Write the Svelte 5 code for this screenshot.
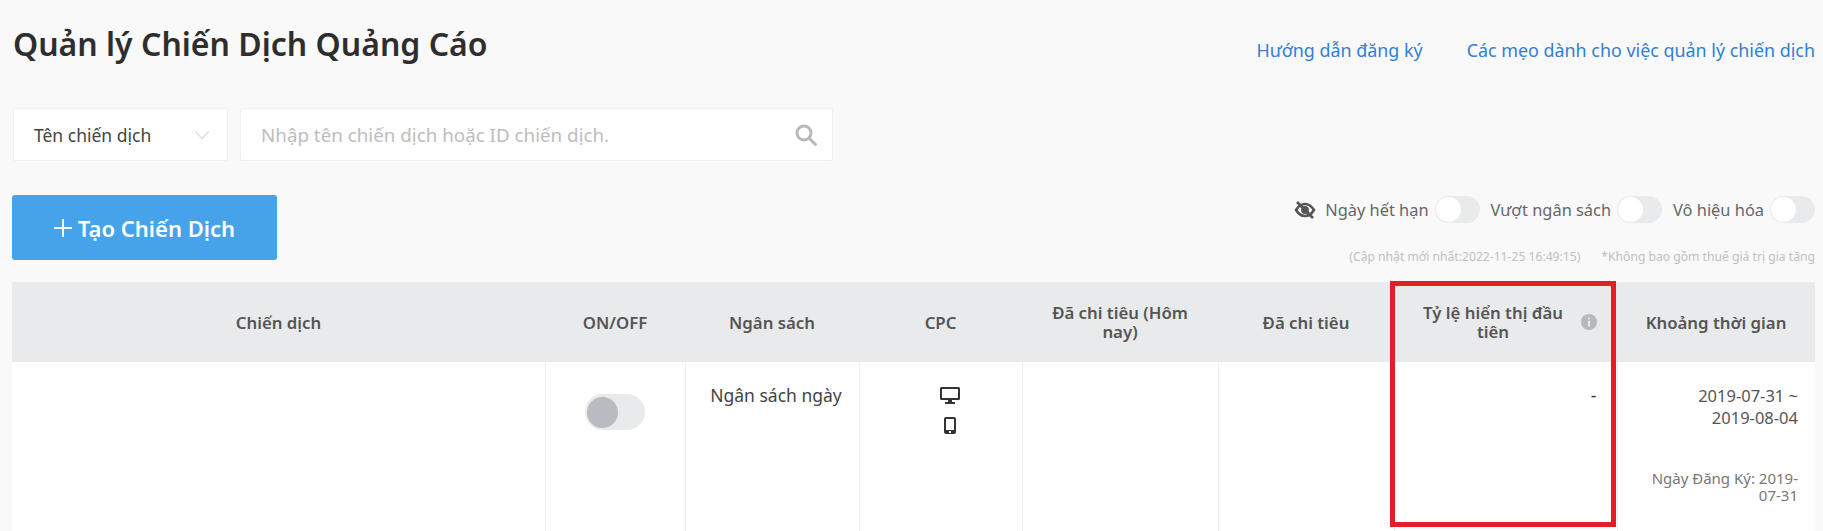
<script>
  const toggles = ['Ngày hết hạn', 'Vượt ngân sách', 'Vô hiệu hóa'];
</script>

<div class="page">
  <header class="top">
    <h1>Quản lý Chiến Dịch Quảng Cáo</h1>
    <nav class="links">
      <a href="#guide">Hướng dẫn đăng ký</a>
      <a href="#tips">Các mẹo dành cho việc quản lý chiến dịch</a>
    </nav>
  </header>

  <div class="search">
    <div class="select">
      <span>Tên chiến dịch</span>
      <svg width="16" height="10" viewBox="0 0 16 10" fill="none" stroke="#dcdee0" stroke-width="1.4"><path d="M1.5 1.5 8 8.5l6.5-7" /></svg>
    </div>
    <div class="input">
      <span>Nhập tên chiến dịch hoặc ID chiến dịch.</span>
      <svg width="24" height="24" viewBox="0 0 24 24" fill="none" stroke="#b9b9b9" stroke-width="3"><circle cx="10" cy="10" r="7" /><path d="m15 15 6.5 6.5" stroke-linecap="round" /></svg>
    </div>
  </div>

  <div class="actions">
    <button class="create">
      <svg width="18" height="18" viewBox="0 0 18 18" stroke="#fff" stroke-width="2"><path d="M9 0v18M0 9h18" /></svg>
      <span>Tạo Chiến Dịch</span>
    </button>
    <div class="filters">
      <div class="toggles">
        <svg class="eye" width="22" height="18" viewBox="0 0 22 18" fill="none" stroke="#555" stroke-width="2.6">
          <path d="M2 9c2.5-4 5.5-6 9-6s6.500 2 9 6c-2.500 4-5.500 6-9 6s-6.500-2-9-6z" />
          <circle cx="11" cy="9" r="2.600" />
          <path d="M3 1l16 16" />
        </svg>
        {#each toggles as label}
          <span class="label">{label}</span>
          <span class="switch"><i></i></span>
        {/each}
      </div>
      <div class="notes">
        <span>(Cập nhật mới nhất:2022-11-25 16:49:15)</span>
        <span>*Không bao gồm thuế giá trị gia tăng</span>
      </div>
    </div>
  </div>

  <div class="table-wrap">
    <table>
      <colgroup>
        <col class="c1" /><col class="c2" /><col class="c3" /><col class="c4" />
        <col class="c5" /><col class="c6" /><col class="c7" /><col class="c8" />
      </colgroup>
      <thead>
        <tr>
          <th>Chiến dịch</th>
          <th>ON/OFF</th>
          <th>Ngân sách</th>
          <th>CPC</th>
          <th>Đã chi tiêu (Hôm nay)</th>
          <th>Đã chi tiêu</th>
          <th>
            <div class="with-info">
              <span>Tỷ lệ hiển thị đầu tiên</span>
              <svg width="16" height="16" viewBox="0 0 16 16"><circle cx="8" cy="8" r="8" fill="#b6b9bc" /><path d="M8 3.500v1.800M8 7v5.500" stroke="#e9eaec" stroke-width="2" /></svg>
            </div>
          </th>
          <th>Khoảng thời gian</th>
        </tr>
      </thead>
      <tbody>
        <tr class="main-row">
          <td></td>
          <td class="center"><span class="row-switch"><i></i></span></td>
          <td class="center budget">Ngân sách ngày</td>
          <td>
            <div class="devices">
              <svg width="20" height="17" viewBox="0 0 20 17"><path fill="#333" fill-rule="evenodd" d="M1.500 0h17A1.500 1.500 0 0 1 20 1.500v10a1.500 1.500 0 0 1-1.500 1.500H12v2h3v2H5v-2h3v-2H1.500A1.500 1.500 0 0 1 0 11.500v-10A1.500 1.500 0 0 1 1.500 0zM2 2v9h16V2z" /></svg>
              <svg width="12" height="17" viewBox="0 0 12 17"><path fill="#333" fill-rule="evenodd" d="M2 0h8a2 2 0 0 1 2 2v13a2 2 0 0 1-2 2H2a2 2 0 0 1-2-2V2a2 2 0 0 1 2-2zm0 2v11h8V2zm3 12v2h2v-2z" /></svg>
            </div>
          </td>
          <td></td>
          <td></td>
          <td class="right dash">-</td>
          <td class="right dates">
            <div class="range">2019-07-31 ~ 2019-08-04</div>
            <div class="reg">Ngày Đăng Ký: 2019-07-31</div>
          </td>
        </tr>
        <tr class="next-row"><td></td><td></td><td></td><td></td><td></td><td></td><td></td><td></td></tr>
      </tbody>
    </table>
    <div class="highlight"></div>
  </div>
</div>

<style>
  :global(body) {
    margin: 0;
    background: #f9f9f9;
  }
  .page {
    height: 531px;
    overflow: hidden;
    padding: 0 8px 0 12px;
    box-sizing: border-box;
    font-family: "Noto Sans", sans-serif;
    color: #333;
  }
  .top {
    display: flex;
    justify-content: space-between;
    height: 108px;
  }
  h1 {
    margin: 22px 0 0 1px;
    font-size: 32px;
    line-height: 44px;
    font-weight: 600;
    color: #2e2e2e;
  }
  .links {
    display: flex;
    gap: 44px;
    margin-top: 38px;
    font-size: 17.9px;
    line-height: 24px;
  }
  .links a {
    color: #2f80d6;
    text-decoration: none;
  }
  .search {
    display: flex;
    gap: 12px;
    margin-left: 1px;
    height: 53px;
  }
  .select, .input {
    display: flex;
    align-items: center;
    justify-content: space-between;
    box-sizing: border-box;
    background: #fff;
    border: 1px solid #f0f0f0;
    border-radius: 2px;
  }
  .select {
    width: 215px;
    padding: 0 17px 0 20px;
    color: #444;
    font-size: 17.5px;
  }
  .input {
    width: 593px;
    padding: 0 14px 0 20px;
    color: #bdbdbd;
    font-size: 18.8px;
  }
  .actions {
    display: flex;
    justify-content: space-between;
    margin-top: 34px;
    height: 87px;
  }
  .create {
    display: flex;
    align-items: center;
    justify-content: center;
    gap: 6px;
    width: 265px;
    height: 65px;
    padding: 0;
    border: 0;
    border-radius: 3px;
    background: #46a3ea;
    color: #fff;
    font: 600 22px "Noto Sans", sans-serif;
  }
  .filters {
    display: flex;
    flex-direction: column;
    align-items: flex-end;
  }
  .toggles {
    display: flex;
    align-items: center;
    height: 27px;
    margin-top: 1px;
    font-size: 16.4px;
    color: #666;
  }
  .eye {
    margin-right: 9px;
  }
  .label {
    margin-right: 6px;
  }
  .switch {
    display: flex;
    align-items: center;
    width: 45px;
    height: 27px;
    border-radius: 14px;
    background: #e9eaec;
    margin-right: 11px;
  }
  .switch:last-child {
    margin-right: 0;
  }
  .switch i {
    display: block;
    width: 25px;
    height: 25px;
    margin-left: 1px;
    border-radius: 50%;
    background: #fff;
  }
  .notes {
    display: flex;
    gap: 21px;
    margin-top: 25px;
    font-size: 12.15px;
    line-height: 18px;
    color: #c0c0c0;
  }
  .table-wrap {
    position: relative;
  }
  table {
    width: 1803px;
    table-layout: fixed;
    border-collapse: collapse;
    background: #fff;
    font-size: 17.5px;
  }
  .c1 { width: 533px; }
  .c2 { width: 140px; }
  .c3 { width: 174px; }
  .c4 { width: 163px; }
  .c5 { width: 196px; }
  .c6 { width: 176px; }
  .c7 { width: 223px; }
  .c8 { width: 198px; }
  th {
    height: 80px;
    padding: 0 20px;
    background: #e9eaec;
    color: #555;
    font-size: 16.8px;
    line-height: 19px;
    font-weight: 600;
    text-align: center;
  }
  td {
    padding: 0;
    vertical-align: top;
    border-left: 1px solid #f0f1f2;
    border-bottom: 2px solid #eeeff0;
  }
  td:first-child {
    border-left: 0;
  }
  .main-row td {
    height: 163px;
  }
  .next-row td {
    height: 10px;
  }
  .with-info {
    display: flex;
    align-items: center;
    margin: 0 0 0 -4px;
    gap: 5px;
  }
  .with-info span {
    flex: 1;
  }
  .with-info svg {
    flex: none;
  }
  .center {
    text-align: center;
    padding-top: 21px;
    line-height: 24px;
    color: #444;
  }
  .budget {
    padding-left: 8px;
  }
  .row-switch {
    display: flex;
    align-items: center;
    width: 60px;
    height: 36px;
    margin: 11px auto 0;
    border-radius: 18px;
    background: #e9eaec;
  }
  .row-switch i {
    display: block;
    width: 31px;
    height: 31px;
    margin-left: 2px;
    border-radius: 50%;
    background: #b9bbc0;
  }
  .devices {
    display: flex;
    flex-direction: column;
    align-items: center;
    gap: 13px;
    padding: 25px 0 0 19px;
  }
  .right {
    text-align: right;
  }
  .dash {
    padding: 21px 20px 0 0;
    line-height: 24px;
  }
  .dates {
    padding: 23px 17px 0 30px;
  }
  .range {
    padding-left: 15px;
    font-size: 16.5px;
    line-height: 22px;
    color: #555;
  }
  .reg {
    margin-top: 41px;
    font-size: 15px;
    line-height: 17px;
    color: #777;
  }
  .highlight {
    position: absolute;
    left: 1378px;
    top: -1px;
    width: 226px;
    height: 246px;
    box-sizing: border-box;
    border: 5px solid #e31e26;
    pointer-events: none;
  }
</style>
